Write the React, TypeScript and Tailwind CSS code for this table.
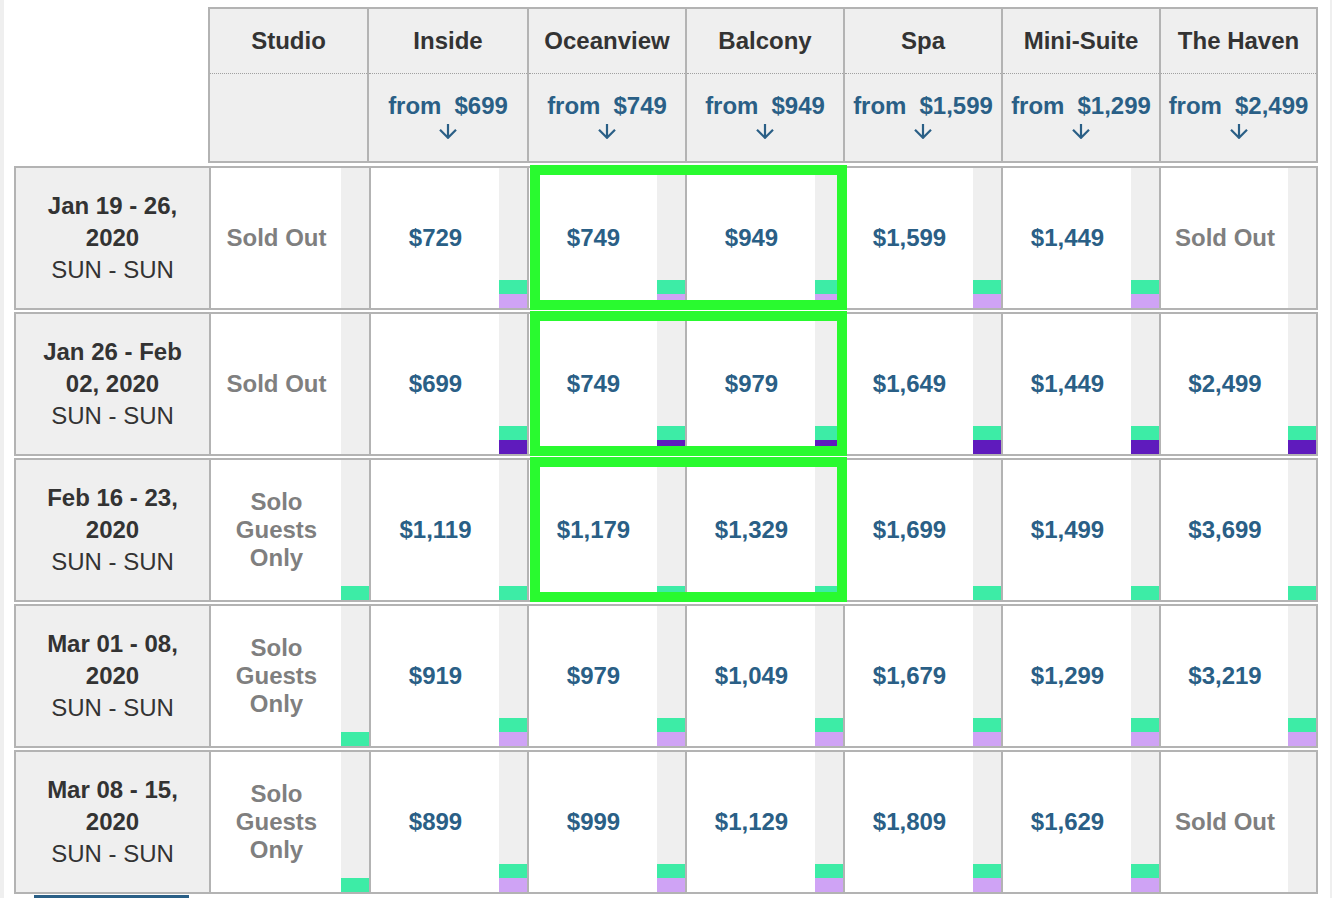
type Bar = "" | "t" | "tl" | "tp";
type Cell = { text: string; kind: "price" | "sold" | "solo"; bar: Bar };
type Row = { d1: string; d2: string; cells: Cell[]; picked?: boolean };

const p = (text: string, bar: Bar): Cell => ({ text, kind: "price", bar });
const sold: Cell = { text: "Sold Out", kind: "sold", bar: "" };
const solo: Cell = { text: "Solo Guests Only", kind: "solo", bar: "t" };

const cabins = [
  { name: "Studio", from: "", w: "w-[159px]" },
  { name: "Inside", from: "$699", w: "w-[160px]" },
  { name: "Oceanview", from: "$749", w: "w-[158px]" },
  { name: "Balcony", from: "$949", w: "w-[158px]" },
  { name: "Spa", from: "$1,599", w: "w-[158px]" },
  { name: "Mini-Suite", from: "$1,299", w: "w-[158px]" },
  { name: "The Haven", from: "$2,499", w: "w-[155px]" },
];

const widths = ["w-[160px]", "w-[158px]", "w-[158px]", "w-[158px]", "w-[158px]", "w-[158px]", "w-[155px]"];

const rows: Row[] = [
  {
    d1: "Jan 19 - 26,",
    d2: "2020",
    picked: true,
    cells: [sold, p("$729", "tl"), p("$749", "tl"), p("$949", "tl"), p("$1,599", "tl"), p("$1,449", "tl"), sold],
  },
  {
    d1: "Jan 26 - Feb",
    d2: "02, 2020",
    picked: true,
    cells: [sold, p("$699", "tp"), p("$749", "tp"), p("$979", "tp"), p("$1,649", "tp"), p("$1,449", "tp"), p("$2,499", "tp")],
  },
  {
    d1: "Feb 16 - 23,",
    d2: "2020",
    picked: true,
    cells: [solo, p("$1,119", "t"), p("$1,179", "t"), p("$1,329", "t"), p("$1,699", "t"), p("$1,499", "t"), p("$3,699", "t")],
  },
  {
    d1: "Mar 01 - 08,",
    d2: "2020",
    cells: [solo, p("$919", "tl"), p("$979", "tl"), p("$1,049", "tl"), p("$1,679", "tl"), p("$1,299", "tl"), p("$3,219", "tl")],
  },
  {
    d1: "Mar 08 - 15,",
    d2: "2020",
    cells: [solo, p("$899", "tl"), p("$999", "tl"), p("$1,129", "tl"), p("$1,809", "tl"), p("$1,629", "tl"), sold],
  },
];

function DownArrow() {
  return (
    <svg width="20" height="15" viewBox="0 0 20 15" fill="none" stroke="#2a5f86" strokeWidth="2.2">
      <path d="M10 0 V13.5 M2 5.8 L10 13.8 L18 5.8" />
    </svg>
  );
}

function Availability({ bar }: { bar: Bar }) {
  return (
    <div className="flex w-[28px] shrink-0 flex-col justify-end bg-[#efefef]">
      {bar !== "" && <div className="h-[14px] bg-[#3deca6]"></div>}
      {bar === "tl" && <div className="h-[14px] bg-[#cfa3f5]"></div>}
      {bar === "tp" && <div className="h-[14px] bg-[#5f1bbd]"></div>}
    </div>
  );
}

function PriceCell({ cell, w, last }: { cell: Cell; w: string; last: boolean }) {
  return (
    <div className={`flex h-full shrink-0 ${w} ${last ? "" : "border-r-2 border-[#b3b3b3]"}`}>
      <div className="flex flex-1 items-center justify-center pl-[1px] text-center font-bold">
        {cell.kind === "price" && <span className="leading-[28px] text-[#2a5f86]">{cell.text}</span>}
        {cell.kind === "sold" && <span className="leading-[28px] text-[#7f7f7f]">{cell.text}</span>}
        {cell.kind === "solo" && (
          <div className="flex flex-col leading-[28px] text-[#7f7f7f]">
            <span>Solo</span>
            <span>Guests</span>
            <span>Only</span>
          </div>
        )}
      </div>
      <Availability bar={cell.bar} />
    </div>
  );
}

export default function App() {
  return (
    <div
      className="flex h-[898px] w-[1332px] overflow-hidden bg-white text-[24px]"
      style={{ fontFamily: '"Liberation Sans", Arial, sans-serif' }}
    >
      <div className="w-[4px] shrink-0 bg-[#efefef]"></div>
      <div className="flex flex-1 flex-col pt-[7px]">
        {/* cabin header */}
        <div className="ml-[204px] flex h-[157px] w-[1110px] border-2 border-[#b3b3b3] bg-[#efefef]">
          {cabins.map((c, i) => (
            <div
              key={c.name}
              className={`flex shrink-0 flex-col ${c.w} ${i === cabins.length - 1 ? "" : "border-r-2 border-[#b3b3b3]"}`}
            >
              <div className="flex h-[65px] items-center justify-center border-b border-dotted border-[#a0a0a0] pb-[1px] font-bold text-[#333]">
                {c.name}
              </div>
              {c.from && (
                <div className="flex flex-col items-center pt-[18px] font-bold text-[#2a5f86]">
                  <div className="flex leading-[28px]">
                    <span>from</span>
                    <span className="ml-[13px]">{c.from}</span>
                  </div>
                  <div className="mt-[4px]">
                    <DownArrow />
                  </div>
                </div>
              )}
            </div>
          ))}
        </div>

        {/* sailings */}
        <div className="ml-[10px] mt-[3px] flex flex-col gap-[2px]">
          {rows.map((r) => (
            <div key={r.d1} className="flex h-[144px] w-[1304px] border-2 border-[#b3b3b3]">
              <div className="flex h-full w-[195px] shrink-0 flex-col items-center justify-center border-r-2 border-[#b3b3b3] bg-[#efefef] leading-[32px] text-[#333]">
                <span className="font-bold">{r.d1}</span>
                <span className="font-bold">{r.d2}</span>
                <span>SUN - SUN</span>
              </div>
              <PriceCell cell={r.cells[0]} w={widths[0]} last={false} />
              <PriceCell cell={r.cells[1]} w={widths[1]} last={false} />
              <div className="relative flex">
                <PriceCell cell={r.cells[2]} w={widths[2]} last={false} />
                <PriceCell cell={r.cells[3]} w={widths[3]} last={false} />
                {r.picked && (
                  <div className="pointer-events-none absolute -bottom-[2px] -right-[2px] -top-[3px] left-[1px] border-[10px] border-[#29fa2f]"></div>
                )}
              </div>
              <PriceCell cell={r.cells[4]} w={widths[4]} last={false} />
              <PriceCell cell={r.cells[5]} w={widths[5]} last={false} />
              <PriceCell cell={r.cells[6]} w={widths[6]} last={true} />
            </div>
          ))}
        </div>
        <div className="ml-[30px] mt-[1px] h-[3px] w-[155px] bg-[#2a5f86]"></div>
      </div>
      <div className="w-[2px] shrink-0 bg-[#efefef]"></div>
    </div>
  );
}
